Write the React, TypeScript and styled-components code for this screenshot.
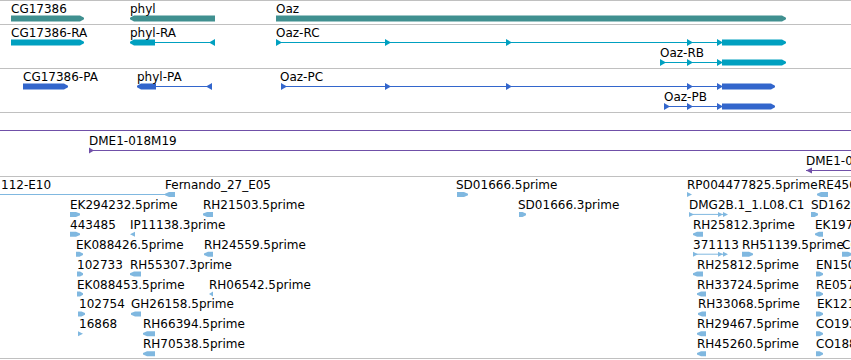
import React from 'react';
import styled, { createGlobalStyle } from 'styled-components';

const GlobalStyle = createGlobalStyle`
  html, body {
    margin: 0;
    padding: 0;
    background: #fff;
  }
  body {
    font-family: 'DejaVu Sans', 'Liberation Sans', sans-serif;
  }
`;

type Dir = 'r' | 'l';

type Part =
  | { t: 'bar'; x0: number; x1: number; dir: Dir }
  | { t: 'line'; x0: number; x1: number }
  | { t: 'mark'; x0: number; x1: number; dir: Dir };

interface Feature {
  label?: string;
  lx?: number;
  row: number;
  parts: Part[];
}

interface TrackDef {
  name: string;
  color: string;
  height: number;
  rowH: number;
  barH: number; // half height of blocks
  markH: number; // half height of small triangles
  features: Feature[];
}

const bar = (x0: number, x1: number, dir: Dir): Part => ({ t: 'bar', x0, x1, dir });
const line = (x0: number, x1: number): Part => ({ t: 'line', x0, x1 });
const mark = (x0: number, x1: number, dir: Dir): Part => ({ t: 'mark', x0, x1, dir });
const marksR = (xs: number[], w = 6) => xs.map((x) => mark(x, x + w, 'r'));

const tracks: TrackDef[] = [
  {
    name: 'genes',
    color: '#409090',
    height: 23,
    rowH: 20,
    barH: 3,
    markH: 3.5,
    features: [
      { label: 'CG17386', lx: 11, row: 0, parts: [bar(11, 84, 'r')] },
      { label: 'phyl', lx: 130, row: 0, parts: [bar(130, 215, 'l')] },
      { label: 'Oaz', lx: 276, row: 0, parts: [bar(276, 786, 'r')] },
    ],
  },
  {
    name: 'transcripts',
    color: '#00a0c0',
    height: 43,
    rowH: 20,
    barH: 3,
    markH: 3.5,
    features: [
      { label: 'CG17386-RA', lx: 11, row: 0, parts: [bar(11, 84, 'r')] },
      {
        label: 'phyl-RA',
        lx: 130,
        row: 0,
        parts: [line(154, 215), bar(130, 155, 'l'), mark(209, 215, 'l')],
      },
      {
        label: 'Oaz-RC',
        lx: 276,
        row: 0,
        parts: [line(276, 722), ...marksR([276, 385, 506, 687, 717]), bar(722, 786, 'r')],
      },
      {
        label: 'Oaz-RB',
        lx: 660,
        row: 1,
        parts: [line(660, 722), ...marksR([660, 687, 717]), bar(722, 786, 'r')],
      },
    ],
  },
  {
    name: 'proteins',
    color: '#3366cc',
    height: 43,
    rowH: 20,
    barH: 3,
    markH: 3.5,
    features: [
      { label: 'CG17386-PA', lx: 23, row: 0, parts: [bar(23, 68, 'r')] },
      {
        label: 'phyl-PA',
        lx: 137,
        row: 0,
        parts: [line(155, 212), bar(137, 156, 'l'), mark(206, 212, 'l')],
      },
      {
        label: 'Oaz-PC',
        lx: 280,
        row: 0,
        parts: [line(281, 722), ...marksR([281, 385, 506, 687, 717]), bar(722, 775, 'r')],
      },
      {
        label: 'Oaz-PB',
        lx: 664,
        row: 1,
        parts: [line(664, 722), ...marksR([664, 687, 717]), bar(722, 775, 'r')],
      },
    ],
  },
  {
    name: 'clones',
    color: '#7050a8',
    height: 63,
    rowH: 20,
    barH: 3,
    markH: 3,
    features: [
      { row: 0, parts: [line(0, 851)] },
      { label: 'DME1-018M19', lx: 89, row: 1, parts: [line(89, 851), mark(89, 94, 'r')] },
      { label: 'DME1-006G19', lx: 806, row: 2, parts: [line(806, 851), mark(806, 812, 'l')] },
    ],
  },
  {
    name: 'ests',
    color: '#80b8e0',
    height: 181,
    rowH: 19.9,
    barH: 2.5,
    markH: 2.5,
    features: [
      { label: '112-E10', lx: 1, row: 0, parts: [line(0, 166)] },
      { label: 'Fernando_27_E05', lx: 165, row: 0, parts: [bar(165, 175, 'l')] },
      { label: 'SD01666.5prime', lx: 456, row: 0, parts: [bar(457, 468, 'r')] },
      { label: 'RP004477825.5prime', lx: 687, row: 0, parts: [mark(687, 692, 'r')] },
      { label: 'RE45036.5prime', lx: 818, row: 0, parts: [bar(817, 828, 'l')] },

      { label: 'EK294232.5prime', lx: 70, row: 1, parts: [bar(70, 80, 'r')] },
      { label: 'RH21503.5prime', lx: 203, row: 1, parts: [bar(203, 213, 'l')] },
      { label: 'SD01666.3prime', lx: 518, row: 1, parts: [bar(519, 526, 'r')] },
      {
        label: 'DMG2B.1_1.L08.C1',
        lx: 689,
        row: 1,
        parts: [line(689, 723), mark(689, 694, 'r'), mark(718, 723, 'r'), mark(723, 728, 'r')],
      },
      { label: 'SD16241.5prime', lx: 811, row: 1, parts: [bar(811, 818, 'r')] },

      { label: '443485', lx: 70, row: 2, parts: [bar(70, 80, 'r')] },
      { label: 'IP11138.3prime', lx: 130, row: 2, parts: [mark(130, 135, 'l')] },
      { label: 'RH25812.3prime', lx: 693, row: 2, parts: [bar(693, 703, 'l')] },
      { label: 'EK197330.5prime', lx: 815, row: 2, parts: [bar(815, 823, 'l')] },

      { label: 'EK088426.5prime', lx: 76, row: 3, parts: [bar(76, 83, 'r')] },
      { label: 'RH24559.5prime', lx: 204, row: 3, parts: [bar(204, 213, 'l')] },
      {
        label: '371113',
        lx: 693,
        row: 3,
        parts: [line(693, 723), mark(693, 698, 'r'), mark(718, 723, 'r'), mark(723, 728, 'r')],
      },
      { label: 'RH51139.5prime', lx: 742, row: 3, parts: [bar(742, 753, 'r')] },
      { label: 'CO195512', lx: 842, row: 3, parts: [bar(842, 852, 'r')] },

      { label: '102733', lx: 77, row: 4, parts: [bar(77, 83, 'r')] },
      { label: 'RH55307.3prime', lx: 130, row: 4, parts: [bar(130, 141, 'l')] },
      { label: 'RH25812.5prime', lx: 697, row: 4, parts: [bar(693, 703, 'l')] },
      { label: 'EN150214.5prime', lx: 816, row: 4, parts: [bar(816, 823, 'r')] },

      { label: 'EK088453.5prime', lx: 77, row: 5, parts: [bar(77, 83, 'r')] },
      { label: 'RH06542.5prime', lx: 209, row: 5, parts: [mark(209, 213, 'l')] },
      { label: 'RH33724.5prime', lx: 697, row: 5, parts: [bar(697, 706, 'l')] },
      { label: 'RE05733.5prime', lx: 816, row: 5, parts: [bar(816, 823, 'r')] },

      { label: '102754', lx: 79, row: 6, parts: [bar(78, 85, 'r')] },
      { label: 'GH26158.5prime', lx: 131, row: 6, parts: [bar(131, 141, 'l')] },
      { label: 'RH33068.5prime', lx: 698, row: 6, parts: [bar(698, 706, 'l')] },
      { label: 'EK121402.5prime', lx: 817, row: 6, parts: [bar(816, 823, 'r')] },

      { label: '16868', lx: 79, row: 7, parts: [mark(78, 83, 'r')] },
      { label: 'RH66394.5prime', lx: 143, row: 7, parts: [bar(143, 155, 'l')] },
      { label: 'RH29467.5prime', lx: 697, row: 7, parts: [bar(697, 706, 'l')] },
      { label: 'CO193260', lx: 816, row: 7, parts: [bar(816, 823, 'r')] },

      { label: 'RH70538.5prime', lx: 143, row: 8, parts: [bar(143, 155, 'l')] },
      { label: 'RH45260.5prime', lx: 697, row: 8, parts: [bar(697, 706, 'l')] },
      { label: 'CO188617', lx: 816, row: 8, parts: [bar(816, 823, 'r')] },
    ],
  },
];

const renderPart = (p: Part, c: number, track: TrackDef, key: string) => {
  if (p.t === 'line') {
    return <line key={key} x1={p.x0} x2={p.x1} y1={c} y2={c} stroke={track.color} strokeWidth={1} />;
  }
  if (p.t === 'mark') {
    const h = track.markH;
    const pts =
      p.dir === 'r'
        ? `${p.x0},${c - h} ${p.x1},${c} ${p.x0},${c + h}`
        : `${p.x1},${c - h} ${p.x0},${c} ${p.x1},${c + h}`;
    return <polygon key={key} points={pts} fill={track.color} />;
  }
  const h = track.barH;
  const tip = Math.min(4, (p.x1 - p.x0) / 2);
  const pts =
    p.dir === 'r'
      ? `${p.x0},${c - h} ${p.x1 - tip},${c - h} ${p.x1},${c - 0.8} ${p.x1},${c + 0.8} ${p.x1 - tip},${c + h} ${p.x0},${c + h}`
      : `${p.x1},${c - h} ${p.x0 + tip},${c - h} ${p.x0},${c - 0.8} ${p.x0},${c + 0.8} ${p.x0 + tip},${c + h} ${p.x1},${c + h}`;
  return <polygon key={key} points={pts} fill={track.color} />;
};

const App: React.FC = () => {
  return (
    <Browser>
      <GlobalStyle />
      {tracks.map((track) => (
        <Track key={track.name} $height={track.height}>
          <Glyphs width={851} height={track.height}>
            {track.features.map((f, i) => {
              const c = f.row * track.rowH + 17.5;
              return f.parts.map((p, j) => renderPart(p, c, track, `${i}-${j}`));
            })}
          </Glyphs>
          {track.features
            .filter((f) => f.label)
            .map((f, i) => (
              <Label key={i} $x={f.lx ?? 0} $y={Math.round(f.row * track.rowH) + 1}>
                {f.label}
              </Label>
            ))}
        </Track>
      ))}
    </Browser>
  );
};

export default App;

const Browser = styled.div`
  width: 851px;
  display: flex;
  flex-direction: column;
  border-top: 1px solid #c0c0c0;
  background: #fff;
`;

const Track = styled.div<{ $height: number }>`
  position: relative;
  height: ${(p) => p.$height}px;
  border-bottom: 1px solid #c0c0c0;
  overflow: hidden;
`;

const Glyphs = styled.svg`
  position: absolute;
  left: 0;
  top: 0;
  display: block;
`;

const Label = styled.div.attrs<{ $x: number; $y: number }>((p) => ({
  style: { left: `${p.$x}px`, top: `${p.$y}px` },
}))<{ $x: number; $y: number }>`
  position: absolute;
  font-family: 'DejaVu Sans', 'Liberation Sans', sans-serif;
  font-size: 12px;
  line-height: 14px;
  color: #000;
  white-space: nowrap;
`;
